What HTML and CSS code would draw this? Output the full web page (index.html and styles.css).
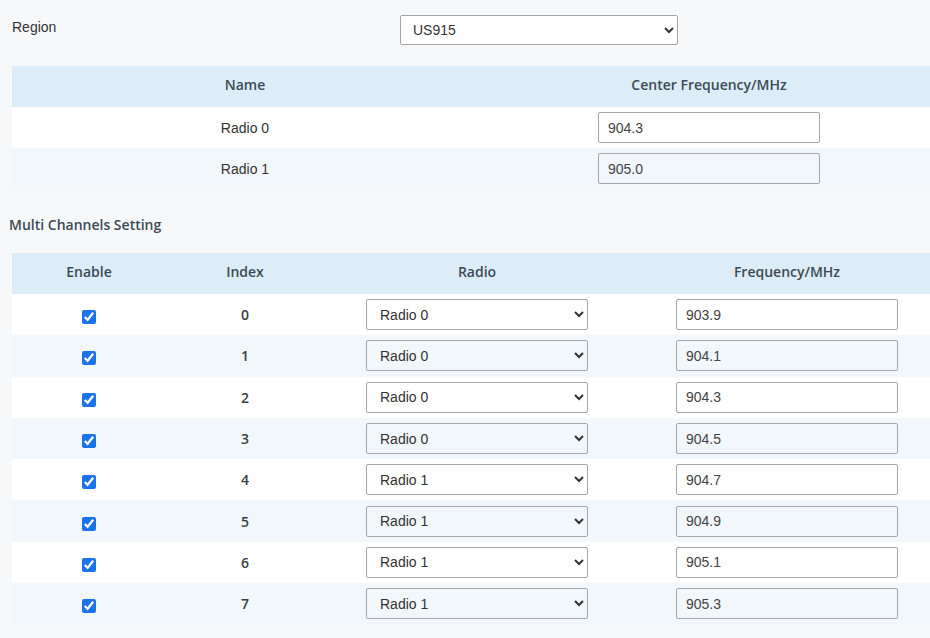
FILE: index.html
```html
<!DOCTYPE html>
<html>
<head>
<meta charset="utf-8">
<link rel="stylesheet" href="styles.css">
</head>
<body>
<div class="region-row">
  <span class="label">Region</span>
  <select class="region-select"><option>US915</option></select>
</div>

<table class="grid radios">
  <colgroup><col class="c-name"><col></colgroup>
  <thead><tr><th>Name</th><th>Center Frequency/MHz</th></tr></thead>
  <tbody>
    <tr><td class="plain">Radio 0</td><td><input class="field" value="904.3"></td></tr>
    <tr><td class="plain">Radio 1</td><td><input class="field" value="905.0"></td></tr>
  </tbody>
</table>

<h3 class="section-title">Multi Channels Setting</h3>

<table class="grid channels">
  <colgroup><col class="c-en"><col class="c-idx"><col class="c-radio"><col></colgroup>
  <thead><tr><th>Enable</th><th>Index</th><th>Radio</th><th>Frequency/MHz</th></tr></thead>
  <tbody>
    <tr><td><input type="checkbox" class="chk" checked></td><td class="idx">0</td><td><select class="field"><option>Radio 0</option></select></td><td><input class="field" value="903.9"></td></tr>
    <tr><td><input type="checkbox" class="chk" checked></td><td class="idx">1</td><td><select class="field"><option>Radio 0</option></select></td><td><input class="field" value="904.1"></td></tr>
    <tr><td><input type="checkbox" class="chk" checked></td><td class="idx">2</td><td><select class="field"><option>Radio 0</option></select></td><td><input class="field" value="904.3"></td></tr>
    <tr><td><input type="checkbox" class="chk" checked></td><td class="idx">3</td><td><select class="field"><option>Radio 0</option></select></td><td><input class="field" value="904.5"></td></tr>
    <tr><td><input type="checkbox" class="chk" checked></td><td class="idx">4</td><td><select class="field"><option>Radio 1</option></select></td><td><input class="field" value="904.7"></td></tr>
    <tr><td><input type="checkbox" class="chk" checked></td><td class="idx">5</td><td><select class="field"><option>Radio 1</option></select></td><td><input class="field" value="904.9"></td></tr>
    <tr><td><input type="checkbox" class="chk" checked></td><td class="idx">6</td><td><select class="field"><option>Radio 1</option></select></td><td><input class="field" value="905.1"></td></tr>
    <tr><td><input type="checkbox" class="chk" checked></td><td class="idx">7</td><td><select class="field"><option>Radio 1</option></select></td><td><input class="field" value="905.3"></td></tr>
  </tbody>
</table>
</body>
</html>
```
FILE: styles.css
```css
html, body {
  margin: 0;
  padding: 0;
  overflow: hidden;
}
body {
  background: #f7f8f9;
  font-family: "Liberation Sans", Arial, sans-serif;
  font-size: 14px;
  color: #333;
}
.region-row {
  display: grid;
  grid-template-columns: 388px 278px;
  align-items: center;
  padding: 15px 0 0 12px;
  height: 51px;
  align-content: start;
}
.region-row .label {
  align-self: start;
  margin-top: 4px;
  color: #333;
}
.region-select {
  height: 30px;
  width: 278px;
  border: 1px solid #a6a6a6;
  border-radius: 2px;
  background: #fff;
  font-family: "Liberation Sans", Arial, sans-serif;
  font-size: 14px;
  color: #333;
  padding-left: 8px;
}
.grid {
  border-collapse: collapse;
  table-layout: fixed;
  margin-left: 12px;
}
.grid th {
  background: #dcedf8;
  height: 37px;
  padding: 0 0 4px 0;
  font-family: "Open Sans", sans-serif;
  font-weight: 600;
  font-size: 14px;
  color: #3d4a55;
  text-align: center;
}
.grid td {
  height: 41px;
  padding: 0;
  text-align: center;
  vertical-align: middle;
}
.grid tbody tr:nth-child(odd) { background: #ffffff; }
.grid tbody tr:nth-child(even) { background: #f2f7fb; }
.radios { width: 928px; }
.radios .c-name { width: 466px; }
.radios td.plain { color: #333; }
.channels { width: 932px; }
.channels tbody tr { height: 41.3px; }
.channels .c-en { width: 154px; }
.channels .c-idx { width: 158px; }
.channels .c-radio { width: 306px; }
.section-title {
  margin: 0;
  height: 64px;
  box-sizing: border-box;
  padding: 26px 0 0 9px;
  font-family: "Open Sans", sans-serif;
  font-weight: 600;
  font-size: 14px;
  color: #3d4a55;
}
.field {
  box-sizing: border-box;
  width: 222px;
  height: 31px;
  border: 1px solid #a6a6a6;
  border-radius: 2px;
  background: transparent;
  font-family: "Liberation Sans", Arial, sans-serif;
  font-size: 14px;
  color: #444;
  padding: 0 0 0 9px;
  vertical-align: middle;
}
select.field {
  padding-left: 9px;
  color: #333;
}
.idx {
  font-family: "Open Sans", sans-serif;
  font-weight: 600;
  color: #3a3f44;
}
.chk {
  width: 14px;
  height: 14px;
  margin: 5px 0 0 0;
  accent-color: #1a73e8;
  vertical-align: middle;
}
```
